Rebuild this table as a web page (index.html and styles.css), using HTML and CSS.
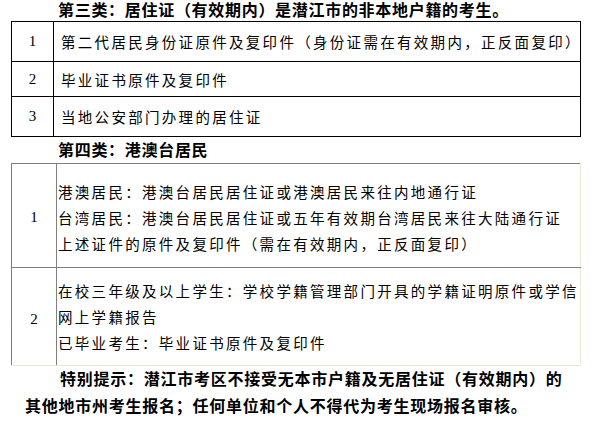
FILE: index.html
```html
<!DOCTYPE html>
<html lang="zh-CN">
<head>
<meta charset="utf-8">
<title>报名材料</title>
<link rel="stylesheet" href="styles.css">
</head>
<body>
<div class="page">
  <p class="heading">第三类：居住证（有效期内）是潜江市的非本地户籍的考生。</p>
  <table class="list list-dark">
    <tr class="r1">
      <td class="num">1</td>
      <td class="txt">第二代居民身份证原件及复印件（身份证需在有效期内，正反面复印）</td>
    </tr>
    <tr class="r2">
      <td class="num">2</td>
      <td class="txt">毕业证书原件及复印件</td>
    </tr>
    <tr class="r3">
      <td class="num">3</td>
      <td class="txt">当地公安部门办理的居住证</td>
    </tr>
  </table>
  <p class="heading heading-2">第四类：港澳台居民</p>
  <table class="list list-soft">
    <tr class="s1">
      <td class="num">1</td>
      <td class="txt multi">港澳居民：港澳台居民居住证或港澳居民来往内地通行证<br>台湾居民：港澳台居民居住证或五年有效期台湾居民来往大陆通行证<br>上述证件的原件及复印件（需在有效期内，正反面复印）</td>
    </tr>
    <tr class="s2">
      <td class="num">2</td>
      <td class="txt multi">在校三年级及以上学生：学校学籍管理部门开具的学籍证明原件或学信<br>网上学籍报告<br>已毕业考生：毕业证书原件及复印件</td>
    </tr>
  </table>
  <p class="note">特别提示：潜江市考区不接受无本市户籍及无居住证（有效期内）的<br>其他地市州考生报名；任何单位和个人不得代为考生现场报名审核。</p>
</div>
</body>
</html>
```
FILE: styles.css
```css
html, body {
  margin: 0;
  padding: 0;
  background: #ffffff;
}

.page {
  width: 599px;
  height: 422px;
  overflow: hidden;
  color: #000;
  font-family: "Liberation Serif", "Noto Sans CJK SC", serif;
}

.heading {
  margin: 0;
  padding-left: 58px;
  height: 21px;
  line-height: 21px;
  font-size: 16px;
  font-weight: bold;
  letter-spacing: 0.7px;
  white-space: nowrap;
}

.heading-2 {
  height: 26px;
  line-height: 27px;
}

.list {
  margin-left: 11px;
  width: 570px;
  border-collapse: collapse;
  table-layout: fixed;
}

.list td {
  padding: 0;
  font-size: 14.5px;
  letter-spacing: 2.3px;
  vertical-align: middle;
  white-space: nowrap;
}

.list .num {
  text-align: center;
  font-size: 15px;
  letter-spacing: 0;
}

.list-dark td {
  border: 1px solid #000;
}

.list-dark .num {
  width: 41px;
}

.list-dark .txt {
  padding-left: 7px;
}

.list-dark .r1 td { height: 39px; }
.list-dark .r2 td { height: 34px; }
.list-dark .r3 td { height: 39px; }

.list-soft {
  border-top: 1px solid #808080;
  border-left: 1px solid #808080;
  border-right: 1px solid #ece9d8;
  border-bottom: 1px solid #ece9d8;
}

.list-soft td {
  border-bottom: 1px solid #808080;
}

.list-soft tr:last-child td {
  border-bottom: 1px solid #ece9d8;
}

.list-soft .num {
  width: 44px;
  border-right: 1px solid #808080;
}

.list-soft .txt {
  padding-left: 1px;
}

.list-soft .multi {
  line-height: 26px;
}

.list-soft .s1 td { height: 97px; padding-top: 6px; }
.list-soft .s1 td.num { height: 99px; padding-top: 4px; }
.list-soft .s2 td { height: 95px; padding-top: 2px; }
.list-soft .s2 td.num { padding-top: 6px; height: 91px; }

.note {
  margin: 0;
  padding-left: 25px;
  text-indent: 35px;
  font-size: 16px;
  font-weight: bold;
  letter-spacing: 0.75px;
  line-height: 27px;
  white-space: nowrap;
}
```
